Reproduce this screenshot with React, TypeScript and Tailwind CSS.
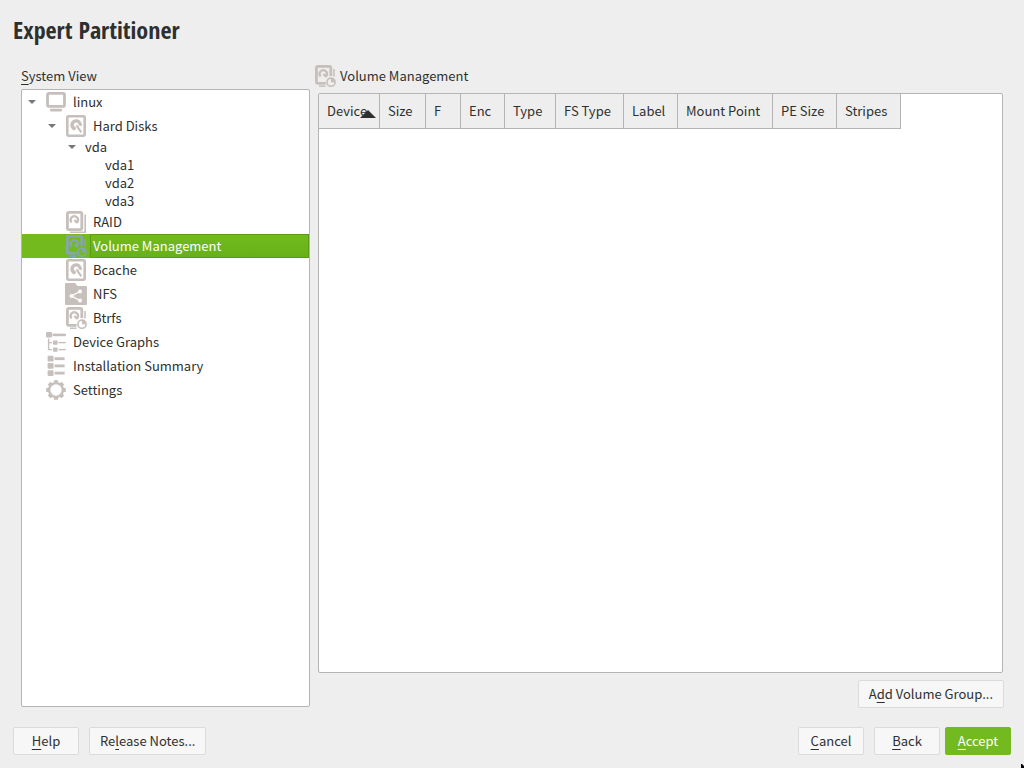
import React, { ReactNode } from "react";

type IconName = "monitor" | "disk" | "raid" | "volume" | "nfs" | "graph" | "list" | "gear";

const hook = (
  <path
    d="M6.6 11.4A3.7 3.7 0 1 1 12.6 10.6L11.8 11.4L9.4 9"
    fill="none"
    stroke="currentColor"
    strokeWidth="2.2"
    strokeLinejoin="round"
  />
);

const drawings: Record<IconName, ReactNode> = {
  monitor: (
    <>
      <rect x="2.5" y="2.3" width="17" height="13" rx="1.4" fill="none" stroke="currentColor" strokeWidth="2.8" />
      <rect x="5" y="17.8" width="12" height="2.8" rx="1" fill="currentColor" />
    </>
  ),
  disk: (
    <>
      <rect x="2.3" y="1.3" width="17.4" height="19.4" rx="1.4" fill="none" stroke="currentColor" strokeWidth="2.6" />
      <path
        d="M11.2 13.6L9.6 15.6A5.8 5.8 0 1 1 16.8 11.2L13.6 10.4A2.4 2.4 0 1 0 10.6 12.2Z"
        fill="currentColor"
      />
      <path d="M12 11.2L15.8 16.6" stroke="currentColor" strokeWidth="2.2" strokeLinecap="round" fill="none" />
    </>
  ),
  raid: (
    <>
      <rect x="2.4" y="1.4" width="14.4" height="17.2" rx="1.6" fill="none" stroke="currentColor" strokeWidth="2.8" />
      {hook}
      <path d="M20.2 3.5V21.2H5" fill="none" stroke="currentColor" strokeWidth="1.6" />
    </>
  ),
  volume: (
    <>
      <path
        d="M11.6 18.4H4Q2.4 18.4 2.4 16.8V3Q2.4 1.4 4 1.4H15.2Q16.8 1.4 16.8 3V11"
        fill="none"
        stroke="currentColor"
        strokeWidth="2.8"
      />
      {hook}
      <path d="M20 4V11.5M5 21.3H11.5" fill="none" stroke="currentColor" strokeWidth="1.5" />
      <circle cx="17" cy="17.2" r="4.1" fill="none" stroke="currentColor" strokeWidth="1.6" />
      <path d="M17 17.2V13.2A4 4 0 0 1 21 17.2Z" fill="currentColor" />
    </>
  ),
  nfs: (
    <>
      <path d="M1 0H10L12.5 3H21Q22 3 22 4V21Q22 22 21 22H1Q0 22 0 21V1Q0 0 1 0Z" fill="currentColor" />
      <path d="M15 8.5L6.5 13L15 17.5" fill="none" stroke="white" strokeWidth="1.4" />
      <circle cx="15" cy="8.5" r="2" fill="white" />
      <circle cx="6.5" cy="13" r="2" fill="white" />
      <circle cx="15" cy="17.5" r="2" fill="white" />
    </>
  ),
  graph: (
    <g fill="currentColor">
      <rect x="1" y="1" width="6" height="5.6" rx="1" />
      <rect x="7.6" y="2.6" width="13.2" height="2.6" />
      <path d="M3.6 7.4V19.2M3.2 11.6H7M3.2 18.6H7" stroke="currentColor" strokeWidth="1.4" />
      <rect x="8" y="9.4" width="4.6" height="4.4" rx="0.8" />
      <rect x="13.6" y="10.9" width="7.2" height="1.4" />
      <rect x="8" y="16.4" width="4.6" height="4.4" rx="0.8" />
      <rect x="13.6" y="17.9" width="7.2" height="1.4" />
    </g>
  ),
  list: (
    <g fill="currentColor">
      <rect x="2.6" y="0.8" width="6" height="5.8" rx="1.2" />
      <rect x="9.6" y="2.3" width="10" height="2.8" />
      <rect x="2.6" y="8" width="6" height="5.8" rx="1.2" />
      <rect x="9.6" y="9.5" width="10" height="2.8" />
      <rect x="2.6" y="15.2" width="6" height="5.8" rx="1.2" />
      <rect x="9.6" y="16.7" width="10" height="2.8" />
    </g>
  ),
  gear: (
    <g fill="none" stroke="currentColor">
      <circle cx="11" cy="11" r="6.9" strokeWidth="2.4" />
      <path
        d="M11 1.2V4M11 18V20.8M1.2 11H4M18 11H20.8M4.1 4.1L6 6M16 16L17.9 17.9M4.1 17.9L6 16M16 6L17.9 4.1"
        strokeWidth="4"
      />
    </g>
  ),
};

function Icon({ name, className = "text-[#c6bfbb]" }: { name: IconName; className?: string }) {
  return (
    <svg viewBox="0 0 22 22" aria-hidden="true" className={`size-[22px] shrink-0 ${className}`}>
      {drawings[name]}
    </svg>
  );
}

type Node = { label: string; icon?: IconName; indent: string; open?: boolean; selected?: boolean };

const nodes: Node[] = [
  { label: "linux", icon: "monitor", indent: "pl-0", open: true },
  { label: "Hard Disks", icon: "disk", indent: "pl-5", open: true },
  { label: "vda", indent: "pl-10", open: true },
  { label: "vda1", indent: "pl-15" },
  { label: "vda2", indent: "pl-15" },
  { label: "vda3", indent: "pl-15" },
  { label: "RAID", icon: "raid", indent: "pl-5" },
  { label: "Volume Management", icon: "volume", indent: "pl-5", selected: true },
  { label: "Bcache", icon: "disk", indent: "pl-5" },
  { label: "NFS", icon: "nfs", indent: "pl-5" },
  { label: "Btrfs", icon: "volume", indent: "pl-5" },
  { label: "Device Graphs", icon: "graph", indent: "pl-0" },
  { label: "Installation Summary", icon: "list", indent: "pl-0" },
  { label: "Settings", icon: "gear", indent: "pl-0" },
];

function TreeRow({ node }: { node: Node }) {
  return (
    <li
      role="treeitem"
      aria-selected={!!node.selected}
      aria-expanded={node.open}
      className={`flex items-center ${node.indent} ${node.icon ? "h-6" : "h-[18px]"} ${
        node.selected ? "bg-[#73ba1e] text-white" : ""
      }`}
    >
      <span className="flex w-5 shrink-0 justify-center">
        {node.open && (
          <svg viewBox="0 0 8 4" aria-hidden="true" className="h-1 w-2 text-[#777777]">
            <path d="M0 0H8L4 4Z" fill="currentColor" />
          </svg>
        )}
      </span>
      {node.icon && (
        <span className="pl-[3px]">
          <Icon name={node.icon} className={node.selected ? "text-[#86a6ac]" : "text-[#c6bfbb]"} />
        </span>
      )}
      <span
        className={`flex h-full flex-1 items-center pl-[3px] ${node.icon ? "ml-[3px]" : ""} ${
          node.selected
            ? "bg-linear-to-b from-[#73ba1e] to-[#67b01a] shadow-[inset_0_0_0_1px_#5a9c14]"
            : ""
        }`}
      >
        {node.label}
      </span>
    </li>
  );
}

const columns = [
  { label: "Device", width: "w-[61px]", sorted: true },
  { label: "Size", width: "w-[46px]" },
  { label: "F", width: "w-[35px]" },
  { label: "Enc", width: "w-[44px]" },
  { label: "Type", width: "w-[51px]" },
  { label: "FS Type", width: "w-[68px]" },
  { label: "Label", width: "w-[54px]" },
  { label: "Mount Point", width: "w-[95px]" },
  { label: "PE Size", width: "w-[64px]" },
  { label: "Stripes", width: "w-[64px]" },
];

function Button({
  children,
  primary,
  size = "w-[66px]",
}: {
  children: ReactNode;
  primary?: boolean;
  size?: string;
}) {
  return (
    <button
      type="button"
      className={`flex h-7 items-center justify-center rounded-xs border whitespace-pre ${size} ${
        primary ? "border-[#73ba20] bg-[#73ba20] text-white" : "border-[#d9dcd8] bg-[#f7f7f7]"
      }`}
    >
      {children}
    </button>
  );
}

function Key({ children }: { children: string }) {
  return <span className="underline decoration-1 underline-offset-[3px]">{children}</span>;
}

export default function App() {
  return (
    <div className="relative flex min-h-screen flex-col overflow-hidden bg-[#eeeeee] px-[13px] pb-[13px] font-['Noto_Sans_CJK_SC',sans-serif] text-[13px] leading-[18px] text-[#2e3030]">
      <h1 className="pt-3 font-['Open_Sans_Condensed','Noto_Sans_Condensed','Open_Sans',sans-serif] text-2xl leading-9 font-bold">
        Expert Partitioner
      </h1>

      <main className="flex flex-1 gap-1 pr-[7px] pl-2">
        <section className="flex w-[289px] shrink-0 flex-col pt-[19px] pb-px">
          <h2 id="system-view" className="pb-1">
            <Key>S</Key>ystem View
          </h2>
          <ul
            role="tree"
            aria-labelledby="system-view"
            className="flex-1 rounded-xs border border-[#b4b4b4] bg-white"
          >
            {nodes.map((node) => (
              <TreeRow key={node.label} node={node} />
            ))}
          </ul>
        </section>

        <section className="flex min-w-0 flex-1 flex-col pt-[17px]">
          <h2 className="flex items-center gap-1 pb-[6px]">
            <Icon name="volume" />
            Volume Management
          </h2>
          <div className="mr-px ml-1 flex-1 overflow-hidden rounded-xs border border-[#b4b4b4] bg-white">
            <table className="w-max table-fixed border-separate border-spacing-0">
              <thead>
                <tr>
                  {columns.map((c) => (
                    <th
                      key={c.label}
                      scope="col"
                      className={`relative h-[35px] border-r border-b border-[#b4b4b4] bg-[#eeeeee] p-0 pl-2 text-left font-normal whitespace-nowrap ${c.width}`}
                    >
                      {c.label}
                      {c.sorted && (
                        <svg
                          viewBox="0 0 16 8"
                          aria-hidden="true"
                          className="absolute right-[3px] bottom-[10px] h-2 w-4"
                        >
                          <path d="M0 8L8 0L16 8Z" fill="#2e3030" />
                        </svg>
                      )}
                    </th>
                  ))}
                </tr>
              </thead>
              <tbody />
            </table>
          </div>
          <div className="flex justify-end pt-[7px]">
            <Button size="px-[10px]">
              A<Key>d</Key>d Volume Group...
            </Button>
          </div>
        </section>
      </main>

      <footer className="flex items-center gap-[5px] pt-[19px]">
        <div className="flex gap-[10px]">
          <Button>
            <Key>H</Key>elp
          </Button>
          <Button size="px-[10px]">
            Re<Key>l</Key>ease Notes...
          </Button>
        </div>
        <div className="ml-auto flex gap-[10px]">
          <Button>
            <Key>C</Key>ancel
          </Button>
          <Button>
            <Key>B</Key>ack
          </Button>
        </div>
        <Button primary>
          <Key>A</Key>ccept
        </Button>
      </footer>

      <svg viewBox="0 0 4 4" aria-hidden="true" className="absolute right-0 bottom-0 size-1">
        <path d="M1 0H2L4 2V4H1Z" fill="#000000" />
      </svg>
    </div>
  );
}
